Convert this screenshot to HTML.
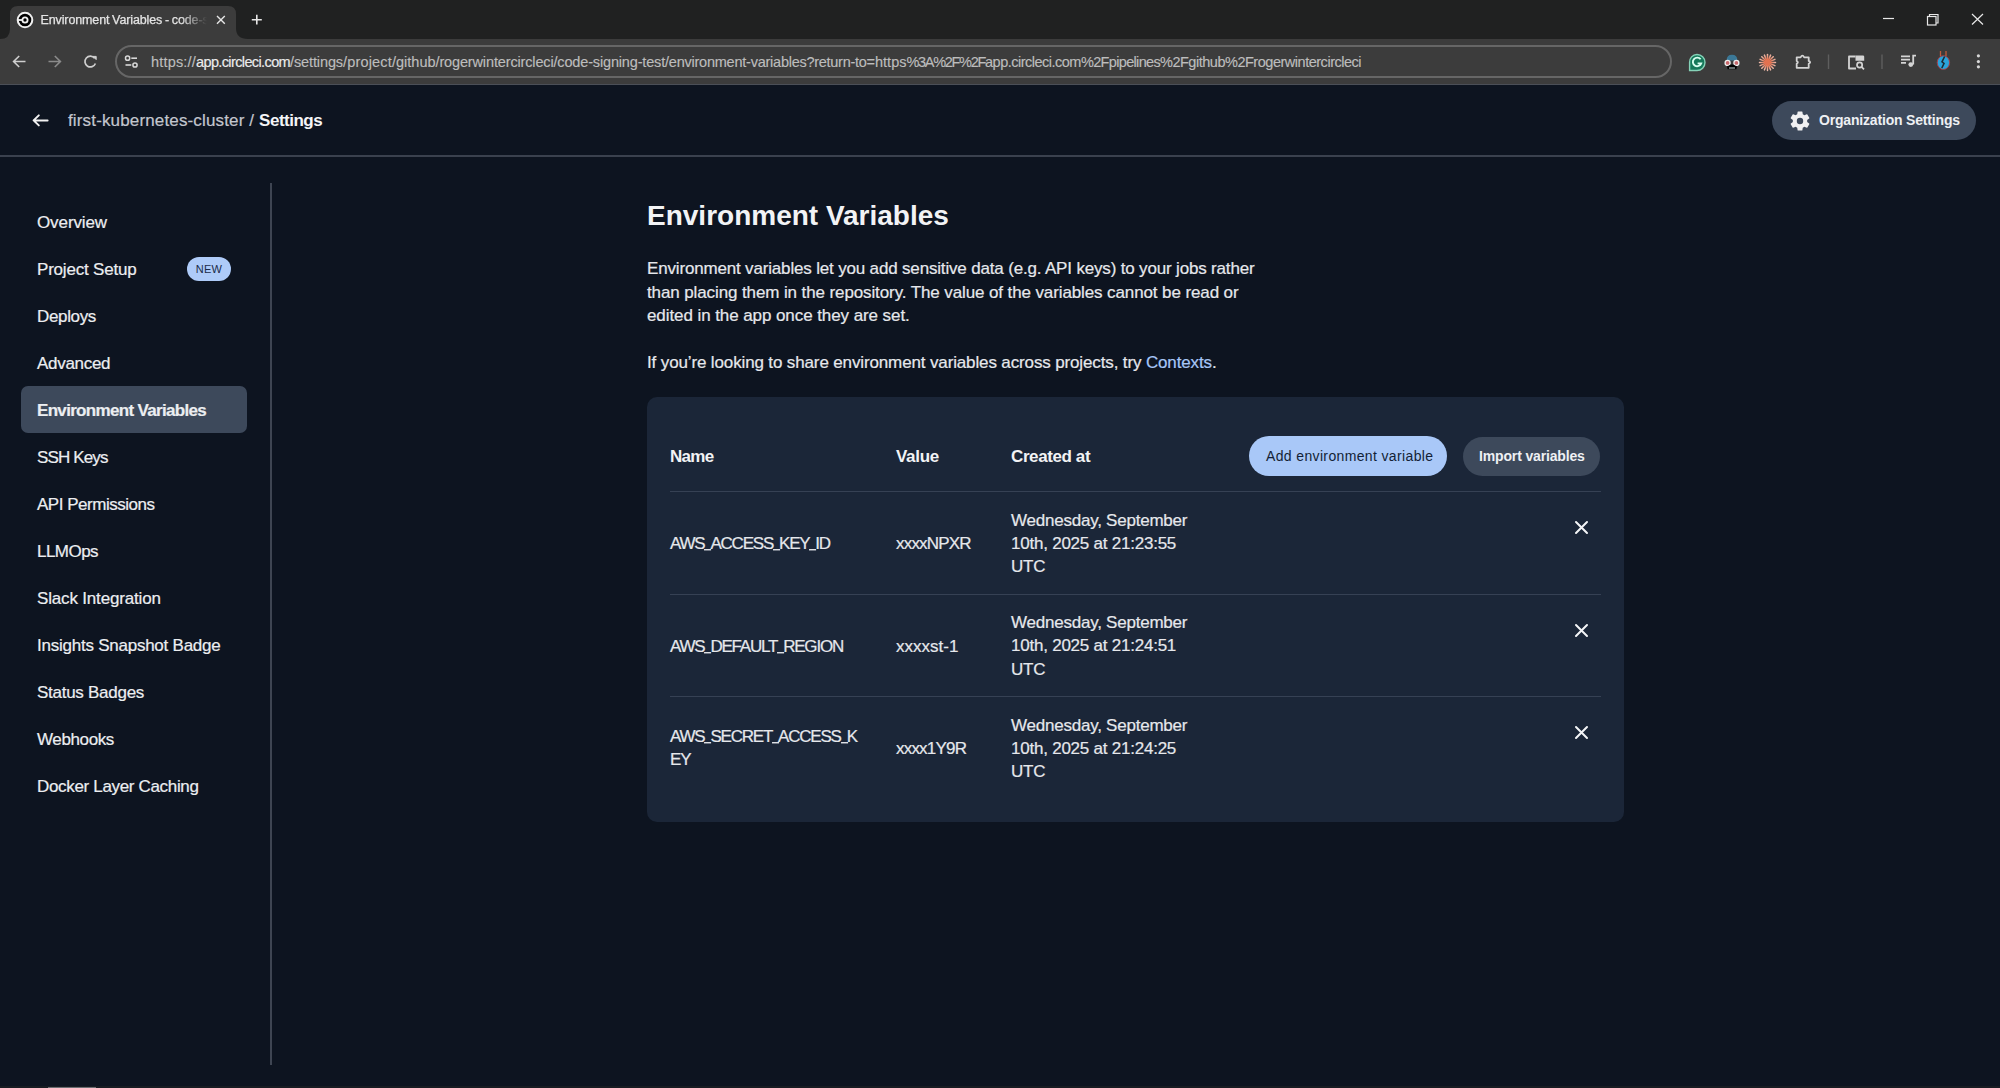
<!DOCTYPE html>
<html><head><meta charset="utf-8">
<style>
*{box-sizing:border-box;margin:0;padding:0}
html,body{width:2000px;height:1088px;overflow:hidden;background:#0d1420;font-family:"Liberation Sans",sans-serif;color:#e8eaee;position:relative}
svg{position:absolute;overflow:visible}
#tabstrip{position:absolute;left:0;top:0;width:2000px;height:39px;background:#202121}
#toolbar{position:absolute;left:0;top:39px;width:2000px;height:46px;background:#3c3c3c}
#omni{position:absolute;left:115px;top:45px;width:1557px;height:33px;border:2px solid #666;border-radius:17px;background:#3c3c3c}
#url{position:absolute;left:151px;top:54px;font-size:14.5px;color:#bdbdbd;white-space:nowrap;-webkit-text-stroke:0.15px #bdbdbd}
#url span{position:absolute;top:0}
#url .dom{color:#ececec;-webkit-text-stroke:0.15px #ececec}
#tabtitle{position:absolute;left:40.5px;top:13px;font-size:12.5px;color:#e4e4e4;white-space:nowrap;letter-spacing:-0.12px;word-spacing:-0.6px;-webkit-text-stroke:0.25px #e4e4e4;width:166px;overflow:hidden;-webkit-mask-image:linear-gradient(to right,#000 140px,transparent 166px)}
#tbline{position:absolute;left:0;top:84px;width:2000px;height:1px;background:#4b4f57}
#hdrline{position:absolute;left:0;top:155px;width:2000px;height:2px;background:#3a414e}
.crumb{position:absolute;left:68px;top:111px;font-size:17px;color:#c3c6ce;-webkit-text-stroke:0.2px #c3c6ce;letter-spacing:0.15px;white-space:nowrap}
.crumb b{color:#f4f5f7;-webkit-text-stroke:0;letter-spacing:-0.5px}
#orgbtn{position:absolute;left:1772px;top:101px;width:204px;height:39px;background:#3d495b;border-radius:20px}
#orgbtn span{position:absolute;left:47px;top:11px;font-size:14px;font-weight:bold;color:#eef0f3;white-space:nowrap;letter-spacing:-0.18px}
#sideline{position:absolute;left:270px;top:183px;width:2px;height:882px;background:#3e4552}
.nav{position:absolute;left:37px;font-size:17px;color:#eceef1;-webkit-text-stroke:0.2px #eceef1;white-space:nowrap;letter-spacing:-0.3px}
#navact{position:absolute;left:21px;top:386px;width:226px;height:47px;background:#3d495b;border-radius:7px}
#newb{position:absolute;left:187px;top:257px;width:44px;height:24px;background:#aecbf8;border-radius:12px;font-size:11px;color:#1b2b48;text-align:center;line-height:24px;letter-spacing:0.2px}
h1{position:absolute;left:647px;top:200px;font-size:28px;font-weight:bold;color:#f2f3f5;white-space:nowrap;letter-spacing:0px}
.p{position:absolute;left:647px;font-size:17px;color:#e6e8ec;-webkit-text-stroke:0.2px #e6e8ec;white-space:nowrap;letter-spacing:-0.17px}
.link{color:#a6c6f7;-webkit-text-stroke:0.2px #a6c6f7}
#card{position:absolute;left:647px;top:397px;width:977px;height:425px;background:#1b2638;border-radius:10px}
.th{position:absolute;font-size:17px;font-weight:bold;color:#f2f3f5;white-space:nowrap;letter-spacing:-0.6px}
.td{position:absolute;font-size:17px;color:#e6e8ec;-webkit-text-stroke:0.2px #e6e8ec;white-space:nowrap;letter-spacing:-0.2px;line-height:23.4px}
.nm{letter-spacing:-1.2px}
.us{display:inline-block;transform:scaleX(0.7);margin:0 -1.2px;position:relative;top:-1.6px}
.div{position:absolute;left:670px;width:931px;height:1px;background:#364154}
#addbtn{position:absolute;left:1249px;top:436px;width:198px;height:40px;background:#a9c8f8;border-radius:20px}
#addbtn span{position:absolute;left:17px;top:11.5px;font-size:14px;color:#131f36;white-space:nowrap;letter-spacing:0.36px}
#impbtn{position:absolute;left:1463px;top:436.5px;width:137px;height:39px;background:#3d495b;border-radius:20px}
#impbtn span{position:absolute;left:16px;top:11.3px;font-size:14px;font-weight:bold;color:#eef0f3;white-space:nowrap;letter-spacing:-0.15px}
#bottom{position:absolute;left:0;top:1086px;width:2000px;height:2px;background:#181c22}
#bottom i{position:absolute;left:48px;top:1px;width:48px;height:1px;background:#6a6d72}
</style></head><body>
<div id="tabstrip"></div>
<!-- active tab with flares -->
<svg style="left:0;top:0" width="260" height="40" viewBox="0 0 260 40">
  <path d="M0 39 Q10 39 10 29 L10 14 Q10 6 18 6 L228 6 Q236 6 236 14 L236 28 Q236 39 248 39 Z" fill="#3c3c3c"/>
</svg>
<!-- favicon circleci -->
<svg style="left:16px;top:11px" width="18" height="18" viewBox="0 0 18 18">
  <circle cx="9" cy="9" r="7.3" fill="#000" stroke="#f0f0f0" stroke-width="2"/>
  <circle cx="9" cy="9" r="2.6" fill="none" stroke="#f0f0f0" stroke-width="1.8"/>
  <line x1="1.5" y1="9" x2="6.4" y2="9" stroke="#f0f0f0" stroke-width="1.8"/>
</svg>
<div id="tabtitle">Environment Variables - code-signing-test</div>
<svg style="left:216px;top:15px" width="10" height="10" viewBox="0 0 10 10">
  <path d="M1 1 L8.8 8.8 M8.8 1 L1 8.8" stroke="#e6e6e6" stroke-width="1.4"/>
</svg>
<svg style="left:251px;top:14px" width="12" height="12" viewBox="0 0 12 12">
  <path d="M5.8 0.8 V10.6 M0.8 5.7 H10.8" stroke="#e6e6e6" stroke-width="1.6"/>
</svg>
<!-- window controls -->
<svg style="left:1880px;top:10px" width="110" height="20" viewBox="0 0 110 20">
  <path d="M3 8.5 H14" stroke="#e8e8e8" stroke-width="1.2"/>
  <rect x="47.5" y="6.5" width="8.5" height="8.5" fill="none" stroke="#e8e8e8" stroke-width="1.2"/>
  <path d="M49.5 6.5 V4.5 H58 V13 H56" fill="none" stroke="#e8e8e8" stroke-width="1.2"/>
  <path d="M92 4 L103 14.5 M103 4 L92 14.5" stroke="#e8e8e8" stroke-width="1.2"/>
</svg>
<div id="toolbar"></div>
<!-- nav buttons -->
<svg style="left:12px;top:54px" width="90" height="16" viewBox="0 0 90 16">
  <path d="M13.5 7.5 H1.8 M7.2 2 L1.6 7.5 L7.2 13" fill="none" stroke="#cfcfcf" stroke-width="1.6"/>
  <path d="M36.5 7.5 H48.2 M42.8 2 L48.4 7.5 L42.8 13" fill="none" stroke="#8b8b8b" stroke-width="1.6"/>
  <path d="M82.6 4.2 A5.4 5.4 0 1 0 83.4 9.5" fill="none" stroke="#cfcfcf" stroke-width="1.7"/>
  <path d="M81 2.4 H84.2 V5.6 Z" fill="#cfcfcf" stroke="#cfcfcf" stroke-width="1"/>
</svg>
<div id="omni"></div>
<svg style="left:124px;top:55px" width="16" height="14" viewBox="0 0 16 14">
  <circle cx="3.6" cy="3.2" r="2.1" fill="none" stroke="#d8d8d8" stroke-width="1.5"/>
  <path d="M7.3 3.2 H13" stroke="#d8d8d8" stroke-width="1.6"/>
  <circle cx="11" cy="10" r="2.1" fill="none" stroke="#d8d8d8" stroke-width="1.5"/>
  <path d="M1.5 10 H7.3" stroke="#d8d8d8" stroke-width="1.6"/>
</svg>
<div id="url"><span style="left:0px;letter-spacing:0.18px">https://</span><span class="dom" style="left:45px;letter-spacing:-0.62px">app.circleci.com</span><span style="left:139px;letter-spacing:-0.11px">/settings</span><span style="left:192px;letter-spacing:0.18px">/project</span><span style="left:241px;letter-spacing:-0.00px">/github</span><span style="left:284.5px;letter-spacing:-0.14px">/rogerwintercircleci</span><span style="left:402.5px;letter-spacing:-0.16px">/code-signing-test</span><span style="left:514px;letter-spacing:-0.23px">/environment-variables</span><span style="left:655.5px;letter-spacing:-0.29px">?return-to</span><span style="left:715.5px;letter-spacing:0.02px">=https</span><span style="left:755.5px;letter-spacing:-1.31px">%3A%2F%2F</span><span style="left:834px;letter-spacing:-0.50px">app.circleci.com</span><span style="left:930px;letter-spacing:-0.67px">%2Fpipelines</span><span style="left:1009px;letter-spacing:-0.48px">%2Fgithub</span><span style="left:1074px;letter-spacing:-0.48px">%2Frogerwintercircleci</span></div>
<!-- extension icons -->
<svg style="left:1680px;top:45px" width="320" height="34" viewBox="0 0 320 34">
  <!-- grammarly -->
  <path d="M17 9.5 A8 8 0 1 1 17 25.5 L9.6 25.5 L9.6 17.5 A7.4 7.4 0 0 1 17 9.5 Z" fill="#15795a" stroke="#86d2b8" stroke-width="1.4"/>
  <path d="M20.6 14.3 A4.3 4.3 0 1 0 21.2 18.4 H17.6" fill="none" stroke="#d8fff0" stroke-width="1.9"/>
  <!-- spy -->
  <path d="M46.6 15.5 Q46.6 9.8 52 9.8 Q57.4 9.8 57.4 15.5 Z" fill="#3b7897"/>
  <circle cx="47.6" cy="17.9" r="2.5" fill="#c9666a" stroke="#eee" stroke-width="1.3"/>
  <circle cx="56.4" cy="17.9" r="2.5" fill="#c9666a" stroke="#eee" stroke-width="1.3"/>
  <path d="M50.8 19.6 L53.2 19.6 L57 21.4 L56.4 24.2 H47.6 L47 21.4 Z" fill="#000"/>
  <path d="M49 23 H55" stroke="#c8d8d8" stroke-width="1"/>
  <!-- claude asterisk -->
  <defs><radialGradient id="cg" gradientUnits="userSpaceOnUse" cx="87.6" cy="17.2" r="8.2"><stop offset="0.35" stop-color="#e2714f"/><stop offset="1" stop-color="#eeb9a8"/></radialGradient></defs>
  <circle cx="87.6" cy="17.2" r="3" fill="#e2714f"/>
  <g stroke="url(#cg)" stroke-width="1.5" stroke-linecap="round">
    <path d="M87.5 9.5 V25.5"/><path d="M79.5 17.5 H95.5"/>
    <path d="M81.8 11.8 L93.2 23.2"/><path d="M93.2 11.8 L81.8 23.2"/>
    <path d="M84.4 10.1 L90.6 24.9"/><path d="M90.6 10.1 L84.4 24.9"/>
    <path d="M80.1 14.4 L94.9 20.6"/><path d="M94.9 14.4 L80.1 20.6"/>
  </g>
  <!-- puzzle -->
  <path d="M116.7 12.3 H120.6 Q122.4 8.8 124.2 12.3 H128.7 V15.9 Q131.6 17.3 128.7 18.7 V22.8 H116.7 V18.7 Q119 17.3 116.7 15.9 Z" fill="none" stroke="#d4d4d4" stroke-width="1.8" stroke-linejoin="round"/>
  <!-- sep -->
  <path d="M148.5 9.5 V24" stroke="#5e5e5e" stroke-width="1.4"/>
  <!-- tab search -->
  <path d="M175.5 11.5 H169 V23.5 H176" fill="none" stroke="#d4d4d4" stroke-width="1.8" stroke-linejoin="round"/>
  <path d="M175.5 10.6 H183 Q184.2 10.6 184.2 11.8 V15.8 H175.5 Z" fill="#d4d4d4"/>
  <circle cx="179.6" cy="20" r="2.6" fill="none" stroke="#d4d4d4" stroke-width="1.7"/>
  <path d="M181.5 21.9 L184 24.4" stroke="#d4d4d4" stroke-width="1.8"/>
  <!-- sep -->
  <path d="M202 9.5 V24" stroke="#5e5e5e" stroke-width="1.4"/>
  <!-- media -->
  <path d="M221 11.3 H230 M221 14.6 H230 M221 17.9 H226" stroke="#d4d4d4" stroke-width="1.8"/>
  <path d="M233.2 19.5 V10.6 H236" fill="none" stroke="#d4d4d4" stroke-width="1.8"/>
  <circle cx="230.8" cy="19.6" r="2.4" fill="#d4d4d4"/>
  <!-- profile -->
  <ellipse cx="263.4" cy="17.6" rx="6.2" ry="6.9" fill="#2aa3dc" stroke="#a23f48" stroke-width="1"/>
  <path d="M260.5 6 V11 M266 6 V11" stroke="#c25a3a" stroke-width="1.3"/>
  <path d="M264.6 11.5 L262 16.8 L264 18.5 L261.8 23" fill="none" stroke="#1d2a36" stroke-width="1.6"/>
  <!-- menu dots -->
  <circle cx="298.4" cy="10.8" r="1.6" fill="#d8d8d8"/>
  <circle cx="298.4" cy="16.6" r="1.6" fill="#d8d8d8"/>
  <circle cx="298.4" cy="21.8" r="1.6" fill="#d8d8d8"/>
</svg>
<div id="tbline"></div>

<!-- page header -->
<svg style="left:31px;top:112px" width="20" height="16" viewBox="0 0 20 16">
  <path d="M16.6 8.4 H2.8 M7.8 3.4 L2.6 8.4 L7.8 13.4" fill="none" stroke="#f2f2f2" stroke-width="2" stroke-linecap="round" stroke-linejoin="round"/>
</svg>
<div class="crumb">first-kubernetes-cluster / <b>Settings</b></div>
<div id="orgbtn"><span>Organization Settings</span></div>
<svg style="left:1788px;top:108.5px" width="24" height="24" viewBox="0 0 24 24">
  <path fill="#f1f1f3" d="M19.14 12.94c.04-.3.06-.61.06-.94 0-.32-.02-.64-.07-.94l2.03-1.58a.49.49 0 0 0 .12-.61l-1.92-3.32a.49.49 0 0 0-.59-.22l-2.39.96c-.5-.38-1.03-.7-1.62-.94l-.36-2.54a.48.48 0 0 0-.48-.41h-3.84a.48.48 0 0 0-.47.41l-.36 2.54c-.59.24-1.13.57-1.62.94l-2.39-.96a.48.48 0 0 0-.59.22L2.74 8.87a.47.47 0 0 0 .12.61l2.03 1.58c-.05.3-.09.63-.09.94s.02.64.07.94l-2.03 1.58a.49.49 0 0 0-.12.61l1.92 3.32c.12.22.37.29.59.22l2.39-.96c.5.38 1.03.7 1.62.94l.36 2.54c.05.24.24.41.48.41h3.84c.24 0 .44-.17.47-.41l.36-2.54c.59-.24 1.13-.56 1.62-.94l2.39.96c.22.08.47 0 .59-.22l1.92-3.32c.12-.22.07-.47-.12-.61l-2.01-1.58zM12 15.2a3.2 3.2 0 1 1 0-6.4 3.2 3.2 0 0 1 0 6.4z"/>
</svg>
<div id="hdrline"></div>

<!-- sidebar -->
<div id="sideline"></div>
<div id="navact"></div>
<div class="nav" style="top:213px;letter-spacing:-0.1px">Overview</div>
<div class="nav" style="top:260px;letter-spacing:-0.2px">Project Setup</div>
<div id="newb">NEW</div>
<div class="nav" style="top:307px;letter-spacing:-0.35px">Deploys</div>
<div class="nav" style="top:354px;letter-spacing:-0.3px">Advanced</div>
<div class="nav" style="top:401px;font-weight:bold;letter-spacing:-0.68px">Environment Variables</div>
<div class="nav" style="top:448px;letter-spacing:-0.85px">SSH Keys</div>
<div class="nav" style="top:495px;letter-spacing:-0.48px">API Permissions</div>
<div class="nav" style="top:542px;letter-spacing:-0.54px">LLMOps</div>
<div class="nav" style="top:589px;letter-spacing:-0.17px">Slack Integration</div>
<div class="nav" style="top:636px;letter-spacing:-0.24px">Insights Snapshot Badge</div>
<div class="nav" style="top:683px;letter-spacing:-0.27px">Status Badges</div>
<div class="nav" style="top:730px;letter-spacing:-0.38px">Webhooks</div>
<div class="nav" style="top:777px;letter-spacing:-0.33px">Docker Layer Caching</div>

<!-- main -->
<h1>Environment Variables</h1>
<div class="p" style="top:259px">Environment variables let you add sensitive data (e.g. API keys) to your jobs rather</div>
<div class="p" style="top:282.5px;letter-spacing:-0.11px">than placing them in the repository. The value of the variables cannot be read or</div>
<div class="p" style="top:306px;letter-spacing:-0.08px">edited in the app once they are set.</div>
<div class="p" style="top:353px;letter-spacing:-0.135px">If you’re looking to share environment variables across projects, try <span class="link">Contexts</span>.</div>

<div id="card"></div>
<div class="th" style="left:670px;top:446.5px;letter-spacing:-0.7px">Name</div>
<div class="th" style="left:896px;top:446.5px;letter-spacing:-0.3px">Value</div>
<div class="th" style="left:1011px;top:446.5px;letter-spacing:-0.4px">Created at</div>
<div id="addbtn"><span>Add environment variable</span></div>
<div id="impbtn"><span>Import variables</span></div>
<div class="div" style="top:491px"></div>
<div class="td nm" style="left:670px;top:532px">AWS<span class="us">_</span>ACCESS<span class="us">_</span>KEY<span class="us">_</span>ID</div>
<div class="td" style="left:896px;top:532px;letter-spacing:-0.8px">xxxxNPXR</div>
<div class="td" style="left:1011px;top:508.5px;letter-spacing:-0.23px">Wednesday, September<br>10th, 2025 at 21:23:55<br>UTC</div>
<svg style="left:1575px;top:521px" width="13" height="13" viewBox="0 0 13 13"><path d="M1 1 L12 12 M12 1 L1 12" stroke="#f4f5f7" stroke-width="2" stroke-linecap="round"/></svg>
<div class="div" style="top:593.5px"></div>
<div class="td nm" style="left:670px;top:634.5px">AWS<span class="us">_</span>DEFAULT<span class="us">_</span>REGION</div>
<div class="td" style="left:896px;top:634.5px;letter-spacing:0px">xxxxst-1</div>
<div class="td" style="left:1011px;top:611px;letter-spacing:-0.23px">Wednesday, September<br>10th, 2025 at 21:24:51<br>UTC</div>
<svg style="left:1575px;top:623.5px" width="13" height="13" viewBox="0 0 13 13"><path d="M1 1 L12 12 M12 1 L1 12" stroke="#f4f5f7" stroke-width="2" stroke-linecap="round"/></svg>
<div class="div" style="top:696px"></div>
<div class="td nm" style="left:670px;top:725px">AWS<span class="us">_</span>SECRET<span class="us">_</span>ACCESS<span class="us">_</span>K<br>EY</div>
<div class="td" style="left:896px;top:737px;letter-spacing:-0.8px">xxxx1Y9R</div>
<div class="td" style="left:1011px;top:713.5px;letter-spacing:-0.23px">Wednesday, September<br>10th, 2025 at 21:24:25<br>UTC</div>
<svg style="left:1575px;top:726px" width="13" height="13" viewBox="0 0 13 13"><path d="M1 1 L12 12 M12 1 L1 12" stroke="#f4f5f7" stroke-width="2" stroke-linecap="round"/></svg>
<div id="bottom"><i></i></div>
</body></html>
